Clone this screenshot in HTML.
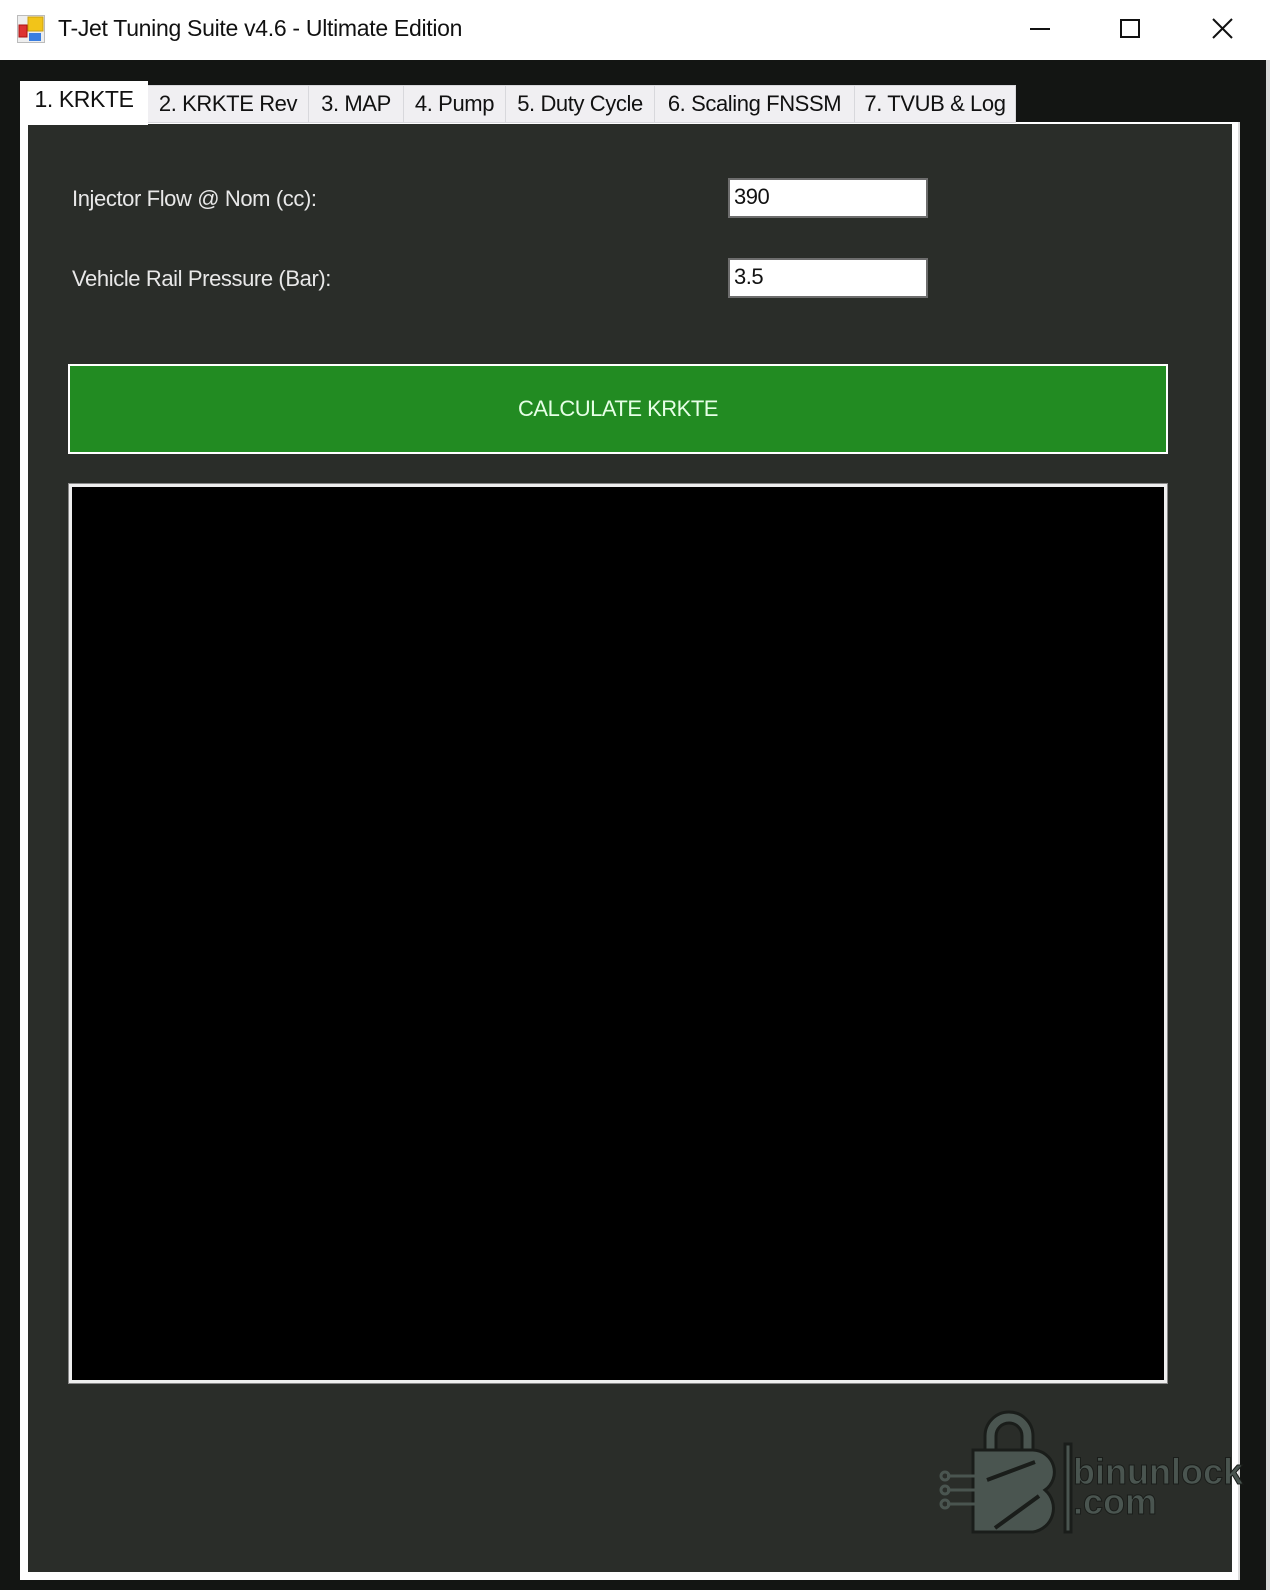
<!DOCTYPE html>
<html><head><meta charset="utf-8"><style>
*{margin:0;padding:0;box-sizing:border-box}
body{width:1270px;height:1590px;background:#131513;position:relative;overflow:hidden;font-family:"Liberation Sans",sans-serif}
.title{position:absolute;left:0;top:0;width:1270px;height:60px;background:#fff}
.ttxt{position:absolute;left:58px;top:15px;font-size:23px;color:#111;letter-spacing:-0.3px}
.abs{position:absolute}
.tab{position:absolute;top:85px;height:38px;background:#f0eff2;border:1px solid #d8d8dc;font-size:22px;color:#111;text-align:center;line-height:36px;letter-spacing:-0.4px}
.panel{position:absolute;left:20px;top:122px;width:1220px;height:1458px;background:#fff;border-right:2px solid #ddd}
.inner{position:absolute;left:8px;top:2px;width:1204px;height:1448px;background:#2a2d29}
.lbl{position:absolute;font-size:22px;color:#e8e8e8;letter-spacing:-0.4px}
.inp{position:absolute;left:728px;width:200px;height:40px;background:#fff;border:2px solid #6d6d6d;font-size:22px;color:#111;padding-left:4px;line-height:34px;letter-spacing:-0.5px}
</style></head><body>
<div class="title">
  <svg class="abs" style="left:17px;top:15px" width="28" height="28" viewBox="0 0 28 28">
    <rect x="0.5" y="0.5" width="27" height="27" fill="#eee" stroke="#bbb"/>
    <rect x="11" y="2" width="15" height="14" fill="#f2c419" stroke="#c9a010"/>
    <rect x="2" y="10" width="8" height="12" fill="#d33" stroke="#a11"/>
    <rect x="12" y="18" width="12" height="8" fill="#3a7ee0"/>
  </svg>
  <div class="ttxt">T-Jet Tuning Suite v4.6 - Ultimate Edition</div>
  <div class="abs" style="left:1030px;top:28px;width:20px;height:2px;background:#111"></div>
  <div class="abs" style="left:1120px;top:19px;width:20px;height:19px;border:2px solid #111"></div>
  <svg class="abs" style="left:1212px;top:18px" width="21" height="21"><path d="M1 1L20 20M20 1L1 20" stroke="#111" stroke-width="2"/></svg>
</div>
<div class="abs" style="left:1266px;top:60px;width:4px;height:1530px;background:#d8d8d8"></div>
<div class="panel"><div class="inner">
  <div class="lbl" style="left:44px;top:62px">Injector Flow @ Nom (cc):</div>
  <div class="lbl" style="left:44px;top:142px">Vehicle Rail Pressure (Bar):</div>
  <div class="inp" style="left:700px;top:54px">390</div>
  <div class="inp" style="left:700px;top:134px">3.5</div>
  <div class="abs" style="left:40px;top:240px;width:1100px;height:90px;background:#228b22;border:2px solid #fff;color:#e6ffe6;font-size:22px;text-align:center;line-height:86px;letter-spacing:-0.5px">CALCULATE KRKTE</div>
  <div class="abs" style="left:41px;top:360px;width:1098px;height:899px;background:#000;border:3px solid #eee;outline:1px solid #888"></div>
</div></div>
<svg class="abs" style="left:935px;top:1410px" width="330" height="130" viewBox="0 0 330 130">
  <g fill="#4a5550" stroke="#1a1d1a" stroke-width="3">
    <path d="M50 40 V26 a24 24 0 0 1 48 0 V40 h-11 V26 a13 13 0 0 0 -26 0 V40z"/>
    <path d="M38 40 h60 a22 22 0 0 1 12 40 a24 24 0 0 1 -12 42 h-60z"/>
    <rect x="130" y="34" width="6" height="88"/>
  </g>
  <path d="M52 70 L100 52 M60 118 L104 86" stroke="#1a1d1a" stroke-width="4"/>
  <g stroke="#4a5550" stroke-width="3" fill="none">
    <path d="M12 66h28M12 80h28M12 94h28"/>
    <circle cx="10" cy="66" r="4"/><circle cx="10" cy="80" r="4"/><circle cx="10" cy="94" r="4"/>
  </g>
  <text x="138" y="74" font-family="Liberation Sans" font-weight="bold" font-size="36" fill="#4a5550" stroke="#1a1d1a" stroke-width="1">binunlock</text>
  <text x="138" y="104" font-family="Liberation Sans" font-weight="bold" font-size="36" fill="#4a5550" stroke="#1a1d1a" stroke-width="1">.com</text>
</svg>
<div class="tab" style="left:147px;width:162px">2. KRKTE Rev</div>
<div class="tab" style="left:308px;width:96px">3. MAP</div>
<div class="tab" style="left:403px;width:103px">4. Pump</div>
<div class="tab" style="left:505px;width:150px">5. Duty Cycle</div>
<div class="tab" style="left:654px;width:201px">6. Scaling FNSSM</div>
<div class="tab" style="left:854px;width:162px">7. TVUB &amp; Log</div>
<div class="abs" style="left:20px;top:81px;width:128px;height:44px;background:#fff;font-size:23px;color:#111;text-align:center;line-height:36px;letter-spacing:-0.4px">1. KRKTE</div>
</body></html>
